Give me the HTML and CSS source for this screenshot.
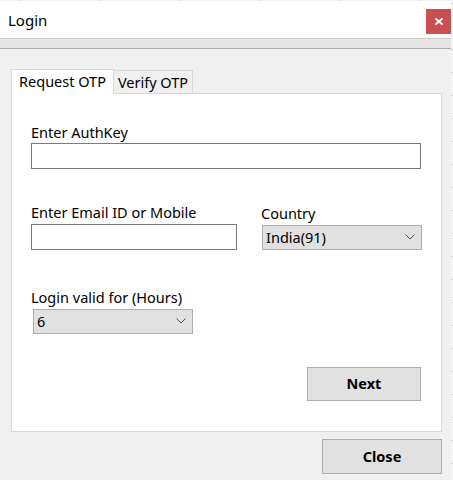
FILE: index.html
```html
<!DOCTYPE html>
<html>
<head>
<meta charset="utf-8">
<link rel="stylesheet" href="styles.css">
</head>
<body>
<div class="window">
  <div class="titlebar">
    <span class="title">Login</span>
    <div class="close-x"><svg width="8" height="7" viewBox="0 0 8 7"><path d="M0.5 0.5 L7.5 6.5 M7.5 0.5 L0.5 6.5" stroke="#fff" stroke-width="1.8" fill="none"/></svg></div>
  </div>
  <div class="menuband"></div>
  <div class="client">
    <div class="tabs">
      <div class="tab active">Request OTP</div>
      <div class="tab">Verify OTP</div>
    </div>
    <div class="panel">
      <div class="field authkey">
        <div class="label">Enter AuthKey</div>
        <div class="textbox wide"></div>
      </div>
      <div class="row">
        <div class="field email">
          <div class="label">Enter Email ID or Mobile</div>
          <div class="textbox short"></div>
        </div>
        <div class="field country">
          <div class="label">Country</div>
          <div class="select country-select"><span>India(91)</span><svg width="10" height="6" viewBox="0 0 10 6"><path d="M0.5 0.5 L5 5 L9.5 0.5" stroke="#555" stroke-width="1" fill="none"/></svg></div>
        </div>
      </div>
      <div class="field hours">
        <div class="label">Login valid for (Hours)</div>
        <div class="select hours-select"><span>6</span><svg width="10" height="6" viewBox="0 0 10 6"><path d="M0.5 0.5 L5 5 L9.5 0.5" stroke="#555" stroke-width="1" fill="none"/></svg></div>
      </div>
      <div class="actions">
        <div class="btn next">Next</div>
      </div>
    </div>
    <div class="footer">
      <div class="btn close">Close</div>
    </div>
  </div>
</div>
</body>
</html>
```

FILE: styles.css
```css
html, body {
  margin: 0;
  padding: 0;
}
body {
  width: 453px;
  height: 480px;
  overflow: hidden;
  background-color: #f3f3f3;
  background-image:
    linear-gradient(to right, #d6d6d6 1px, transparent 1px),
    linear-gradient(to bottom, #d6d6d6 1px, transparent 1px);
  background-size: 80px 23px;
  background-position: 20px 0, 0 3px;
  font-family: "Noto Sans", "Open Sans", sans-serif;
  font-size: 14.5px;
  color: #000;
}
.window {
  width: 451px;
  height: 479px;
  margin-top: 1px;
  background: #f0f0f0;
  display: flex;
  flex-direction: column;
}
.titlebar {
  height: 37px;
  background: #fff;
  display: flex;
  align-items: flex-start;
}
.title {
  font-size: 15px;
  line-height: 20px;
  margin: 9px 0 0 8px;
}
.close-x {
  margin-left: auto;
  margin-top: 8px;
  width: 25px;
  height: 25px;
  background: #c75050;
  display: flex;
  align-items: center;
  justify-content: center;
}
.menuband {
  height: 9px;
  background: #e6e6e6;
  border-top: 1px solid #c8c8c8;
  border-bottom: 1px solid #acacac;
}
.client {
  flex: 1;
  padding: 20px 0 0 11px;
}
.tabs {
  display: flex;
  align-items: flex-end;
  height: 24px;
}
.tab {
  box-sizing: border-box;
  border: 1px solid #d9d9d9;
  border-bottom: none;
  line-height: 20px;
  text-align: center;
}
.tab.active {
  width: 103px;
  height: 25px;
  margin-bottom: -1px;
  background: #fff;
  position: relative;
  z-index: 1;
  padding-top: 1px;
}
.tab:not(.active) {
  width: 80px;
  height: 23px;
  margin-left: -1px;
  background: #f0f0f0;
  padding-top: 1px;
}
.panel {
  box-sizing: border-box;
  width: 431px;
  height: 339px;
  background: #fff;
  border: 1px solid #d9d9d9;
  padding: 29px 20px 0 19px;
}
.label {
  line-height: 19px;
  white-space: nowrap;
}
.textbox {
  box-sizing: border-box;
  border: 1px solid #7a7a7a;
  background: #fff;
  height: 26px;
}
.authkey .textbox {
  margin-top: 1px;
  width: 390px;
}
.row {
  display: flex;
  margin-top: 34px;
}
.email .textbox {
  margin-top: 2px;
  width: 206px;
}
.country {
  margin-left: 24px;
  padding-top: 1px;
}
.select {
  box-sizing: border-box;
  height: 25px;
  background: #e1e1e1;
  border: 1px solid #adadad;
  display: flex;
  align-items: center;
  justify-content: space-between;
  padding: 0 6px 1px 3px;
}
.country-select {
  margin-top: 2px;
  margin-left: 1px;
  width: 160px;
}
.hours {
  margin-top: 38px;
}
.hours-select {
  margin-top: 2px;
  margin-left: 2px;
  width: 160px;
}
.actions {
  display: flex;
  justify-content: flex-end;
  margin-top: 33px;
}
.btn {
  box-sizing: border-box;
  background: #e1e1e1;
  border: 1px solid #adadad;
  font-weight: bold;
  display: flex;
  align-items: center;
  justify-content: center;
  padding-bottom: 2px;
}
.next {
  width: 114px;
  height: 34px;
}
.footer {
  width: 431px;
  display: flex;
  justify-content: flex-end;
  margin-top: 7px;
}
.close {
  width: 120px;
  height: 35px;
}
```
